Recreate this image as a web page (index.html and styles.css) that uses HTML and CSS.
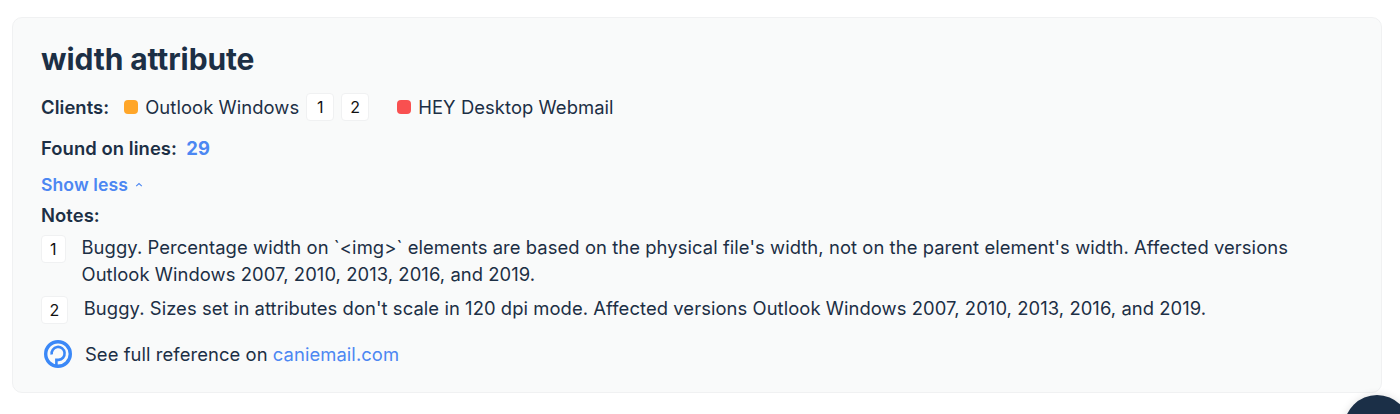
FILE: index.html
```html
<!doctype html>
<html>
<head>
<meta charset="utf-8">
<title>width attribute</title>
<link rel="stylesheet" href="styles.css">
</head>

<body>
<div class="card">
    <h2 class="title">width attribute</h2>
    <div class="clients">
        <span class="label">Clients:</span>
        <span class="client">
            <i class="dot dot-orange"></i>Outlook Windows
            <span class="ref">1</span><span class="ref">2</span>
        </span>
        <span class="client">
            <i class="dot dot-red"></i>HEY Desktop Webmail
        </span>
    </div>
    <div class="lines"><span class="label">Found on lines:</span> <a class="line-link">29</a></div>
    <a class="toggle">Show less
        <svg class="chevron" width="10" height="10" viewBox="0 0 10 10"><path d="M2.2 6.2 5 3.6 7.8 6.2" fill="none" stroke="currentColor" stroke-width="1.1"/></svg>
    </a>
    <div class="label notes-head">Notes:</div>
    <div class="note">
        <span class="ref ref-note">1</span>
        <p>Buggy. Percentage width on `&lt;img&gt;` elements are based on the physical file's width, not on the parent element's width. Affected versions Outlook Windows 2007, 2010, 2013, 2016, and 2019.</p>
    </div>
    <div class="note note-two">
        <span class="ref ref-note">2</span>
        <p>Buggy. Sizes set in attributes don't scale in 120 dpi mode. Affected versions Outlook Windows 2007, 2010, 2013, 2016, and 2019.</p>
    </div>
    <div class="source">
        <svg class="logo" width="28" height="28" viewBox="0 0 28 28">
            <circle cx="14" cy="14" r="12.3" fill="none" stroke="#3b88f7" stroke-width="3.4"/>
            <path d="M7.7 14.6A6.5 6.5 0 1 1 14.6 19.9H12.4V26" fill="none" stroke="#3b88f7" stroke-width="2.6"/>
        </svg>
        <span>See full reference on <a class="site">caniemail.com</a></span>
    </div>
</div>
<div class="chat-clip"><div class="chat"></div></div>
</body>
</html>
```

FILE: styles.css
```css
html, body { height: 100%; overflow: hidden; }
body { margin: 0; background: #fff; color: #1c2f45; font-family: Inter, "Liberation Sans", sans-serif; font-size: 18.4px; line-height: 27px; letter-spacing: .075px; position: relative; }
a { color: #4c87f2; }
.card { margin: 17px 18px 0 12px; padding: 20px 28px 0; height: 354px; background: #f9fafa; border: 1px solid #f0f1f2; border-radius: 10px; }
.title { margin: 0; font-size: 30px; line-height: 42px; font-weight: 700; letter-spacing: -.1px; }
.label { font-weight: 600; }
.clients { display: flex; align-items: center; margin-top: 13px; height: 28px; }
.client { display: flex; align-items: center; }
.clients .client:nth-child(2) { margin-left: 15px; margin-right: 28px; }
.dot { width: 14px; height: 14px; border-radius: 4px; margin-right: 7px; }
.dot-orange { background: #ffa629; }
.dot-red { background: #f95050; }
.ref { display: inline-flex; justify-content: center; align-items: center; width: 28px; height: 28px; box-sizing: border-box; margin-left: 7px; background: #fff; border: 1px solid #f0f1f2; border-radius: 4px; font-size: 16px; letter-spacing: 0; color: #111; }
.lines { margin-top: 14px; }
.line-link { font-weight: 700; margin-left: 4px; }
.toggle { display: flex; align-items: center; gap: 6px; margin-top: 9px; font-size: 17.6px; font-weight: 600; }
.notes-head { margin-top: 4px; }
.note { display: flex; align-items: flex-start; margin-top: 5px; }
.note p { margin: 0; }
.ref-note { margin: 1px 16px 0 0; width: auto; padding: 0 8px; }
.note-two { margin-top: 7px; }
.note-two .ref-note { padding: 0 7.5px; }
.source { display: flex; align-items: center; gap: 13px; margin-top: 16px; padding-left: 3px; }
.logo { flex: none; }
.chat-clip { position: absolute; right: 0; bottom: 0; width: 64px; height: 28px; overflow: hidden; }
.chat { width: 66px; height: 66px; margin: 9px 0 0 8px; border-radius: 50%; background: #1b2f47; box-shadow: 0 0 8px rgba(0,0,0,.12); }
```
